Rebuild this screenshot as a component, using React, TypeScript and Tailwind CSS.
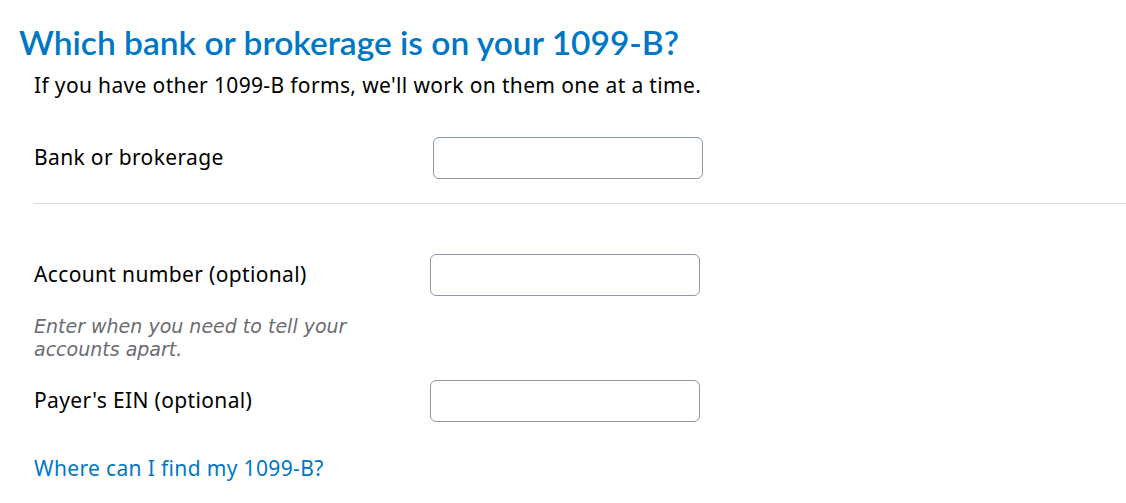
import React from 'react';

const body = { fontFamily: '"Noto Sans", "Open Sans", sans-serif' };
const heading = { fontFamily: 'Lato, "Noto Sans", sans-serif' };
const hint = { fontFamily: '"DejaVu Sans", "Noto Sans", sans-serif' };

function Field({ label, offset = false }: { label: string; offset?: boolean }) {
  return (
    <div className="flex items-center">
      <label className={`${offset ? 'w-[399px]' : 'w-[396px]'} shrink-0 text-[21px] tracking-[0.35px] text-black`}>
        {label}
      </label>
      <input
        type="text"
        className="h-[42px] w-[270px] rounded-[6px] border border-[#8d9aa3] bg-white px-3 text-[18px] outline-none"
      />
    </div>
  );
}

export default function App() {
  return (
    <div className="min-h-[503px] w-[1126px] bg-white" style={body}>
      <h1 className="pl-[19px] pt-[20px] text-[33.5px] font-semibold leading-[44px] text-[#0077c5]" style={heading}>
        Which bank or brokerage is on your 1099-B?
      </h1>
      <p className="mt-[7px] pl-[34px] text-[21px] leading-[28px] tracking-[0.35px] text-black">
        If you have other 1099-B forms, we'll work on them one at a time.
      </p>

      <div className="mt-[38px] pl-[34px]">
        <Field label="Bank or brokerage" offset />
      </div>
      <div className="ml-[34px] mt-[24px] border-t border-[#dcdcdc]" />

      <div className="mt-[50px] pl-[34px]">
        <Field label="Account number (optional)" />
        <p className="mt-[19px] w-[340px] text-[19px] italic leading-[23px] text-[#6b6c72]" style={hint}>
          Enter when you need to tell your accounts apart.
        </p>
      </div>

      <div className="mt-[19px] pl-[34px]">
        <Field label="Payer's EIN (optional)" />
      </div>

      <div className="mt-[32px] pl-[34px]">
        <a href="#" className="text-[21px] leading-[28px] tracking-[0.35px] text-[#0077c5]">
          Where can I find my 1099-B?
        </a>
      </div>
    </div>
  );
}
